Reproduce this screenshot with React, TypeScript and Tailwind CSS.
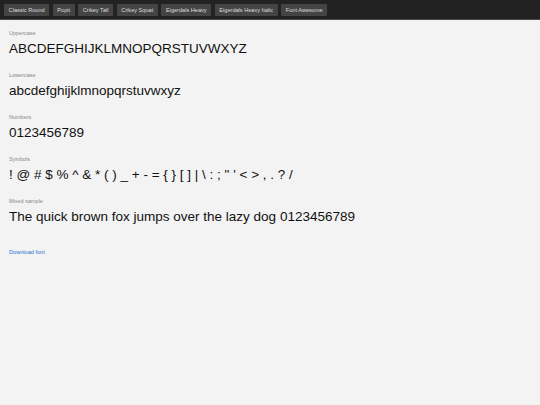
const fonts = [
  'Classic Round',
  'Popit',
  'Crikey Tall',
  'Crikey Squat',
  'Eigerdals Heavy',
  'Eigerdals Heavy Italic',
  'Font Awesome',
];

const samples = [
  { label: 'Uppercase', text: 'ABCDEFGHIJKLMNOPQRSTUVWXYZ' },
  { label: 'Lowercase', text: 'abcdefghijklmnopqrstuvwxyz' },
  { label: 'Numbers', text: '0123456789' },
  { label: 'Symbols', text: '! @ # $ % ^ & * ( ) _ + - = { } [ ] | \\ : ; " \' < > , . ? /' },
  { label: 'Mixed sample', text: 'The quick brown fox jumps over the lazy dog 0123456789' },
];

export default function App() {
  return (
    <div className="min-h-[405px] w-[540px] bg-[#f3f3f3] font-['Liberation_Sans',Arial,sans-serif]">
      {/* Font switcher bar */}
      <nav className="flex h-[20px] items-center gap-[3.5px] border-b border-[#4a4a4a] bg-[#222] px-[4px]">
        {fonts.map((f) => (
          <button
            key={f}
            className="h-[12px] rounded-[1px] bg-[#444] px-[4.6px] text-[5.6px] leading-[12px] text-[#ddd]"
          >
            {f}
          </button>
        ))}
      </nav>

      {/* Glyph samples */}
      <main className="px-[9px] pt-[9px]">
        {samples.map((s) => (
          <section key={s.label} className="h-[42px]">
            <div className="text-[5.5px] leading-[8px] text-[#888]">{s.label}</div>
            <div className="mt-[3px] text-[13.5px] leading-[18px] text-[#111]">{s.text}</div>
          </section>
        ))}
        <a href="#" className="mt-[9px] block text-[5.6px] leading-[8px] text-[#2a70d0]">
          Download font
        </a>
      </main>
    </div>
  );
}
